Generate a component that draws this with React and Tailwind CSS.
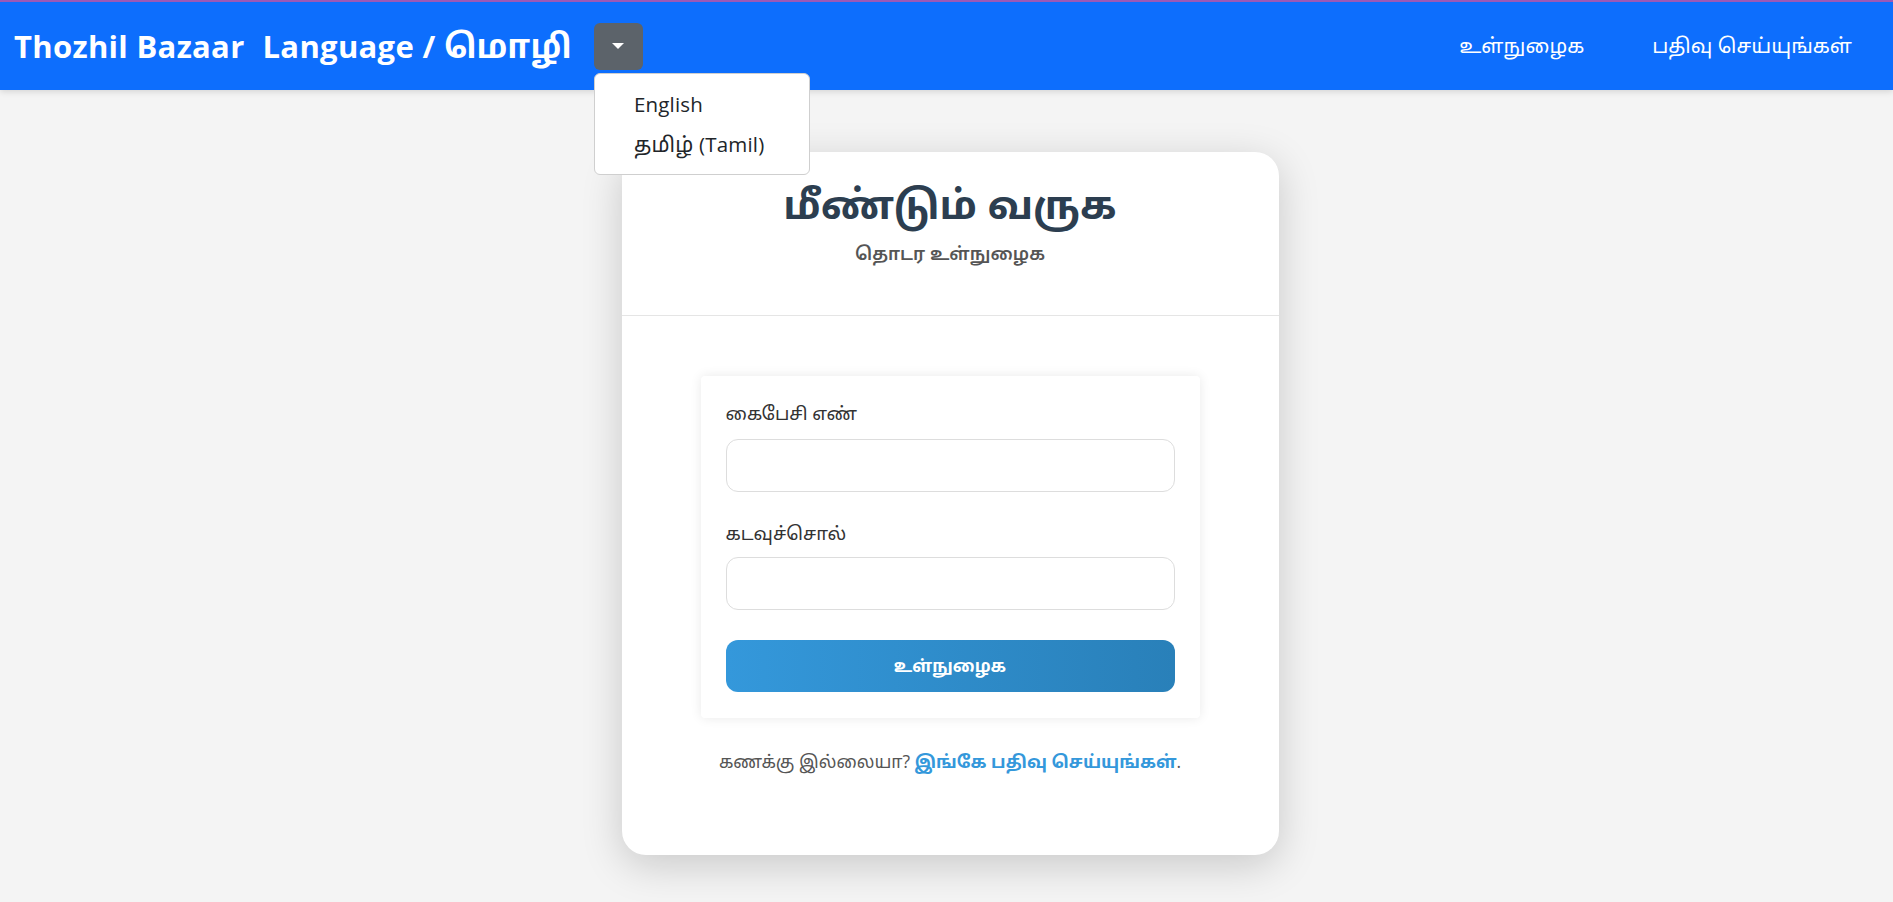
import { useState } from "react";

const font = { fontFamily: '"Open Sans", "Noto Sans Tamil", sans-serif' };

const App = () => {
  const [mobile, setMobile] = useState("");
  const [password, setPassword] = useState("");

  return (
    <div className="min-h-screen bg-[#f4f4f4]" style={font}>
      {/* Navbar */}
      <nav className="relative h-[90px] border-t-2 border-[#9b59b6] bg-[#0d6efd] shadow-[0_2px_6px_rgba(0,0,0,0.12)] flex items-center justify-between pl-[14px] pr-[41px]">
        <div className="flex items-center">
          <span className="text-[31px] font-bold text-white tracking-[0.01em]">Thozhil Bazaar</span>
          <span className="ml-[18px] text-[31px] font-bold text-white tracking-[0.01em]">
            Language / <span className="text-[33px]">மொழி</span>
          </span>
          <div className="relative ml-[22px]">
            <button className="flex h-[47px] w-[49px] items-center justify-center rounded-[6px] bg-[#5c636a]">
              <span className="block h-0 w-0 border-x-[6px] border-t-[6px] border-x-transparent border-t-white" />
            </button>
            {/* Dropdown menu */}
            <div className="absolute left-0 top-[50px] z-10 w-[216px] rounded-[6px] border border-[#cfcfcf] bg-white py-[10px] text-[20.5px] leading-[30px] text-[#212529]">
              <div className="px-[39px] py-[5px] tracking-[0.01em]">English</div>
              <div className="px-[39px] py-[5px] tracking-[0.01em]">
                <span className="text-[21px]">தமிழ்</span> (Tamil)
              </div>
            </div>
          </div>
        </div>
        <div className="flex items-center gap-[68px] text-[20.7px] text-white">
          <a>உள்நுழைக</a>
          <a>பதிவு செய்யுங்கள்</a>
        </div>
      </nav>

      {/* Card */}
      <div className="flex justify-center pl-[7px]">
        <div className="mt-[62px] w-[657px] rounded-[24px] bg-white shadow-[0_10px_40px_rgba(0,0,0,0.18)] pb-[81px]">
          <div className="border-b border-[#e5e5e5] pt-[20px] pb-[48px] text-center">
            <h1 className="text-[40px] font-bold leading-[64px] text-[#2c3e50]">மீண்டும் வருக</h1>
            <p className="mt-[4px] text-[18px] font-semibold text-[#555]">தொடர உள்நுழைக</p>
          </div>

          <div className="px-[79px] pt-[60px]">
            <form className="rounded-[4px] bg-white px-[25px] pt-[24px] pb-[26px] shadow-[0_0_12px_rgba(0,0,0,0.09)]">
              <label className="block text-[18.5px] leading-[26px] text-[#333]">கைபேசி எண்</label>
              <input
                type="text"
                value={mobile}
                onChange={(e) => setMobile(e.target.value)}
                className="mt-[13px] block h-[53px] w-full rounded-[12px] border border-[#dddddd] px-3 outline-none"
              />
              <label className="mt-[28px] block text-[18.5px] leading-[26px] text-[#333]">கடவுச்சொல்</label>
              <input
                type="password"
                value={password}
                onChange={(e) => setPassword(e.target.value)}
                className="mt-[11px] block h-[53px] w-full rounded-[12px] border border-[#dddddd] px-3 outline-none"
              />
              <button
                type="submit"
                className="mt-[30px] block h-[52px] w-full rounded-[12px] bg-gradient-to-r from-[#3498db] to-[#2980b9] text-[17px] font-bold text-white"
              >
                உள்நுழைக
              </button>
            </form>

            <p className="mt-[30px] text-center text-[17.5px] text-[#555]">
              கணக்கு இல்லையா?{" "}
              <a className="font-bold text-[#3498db]">இங்கே பதிவு செய்யுங்கள்</a>.
            </p>
          </div>
        </div>
      </div>
    </div>
  );
};

export default App;
